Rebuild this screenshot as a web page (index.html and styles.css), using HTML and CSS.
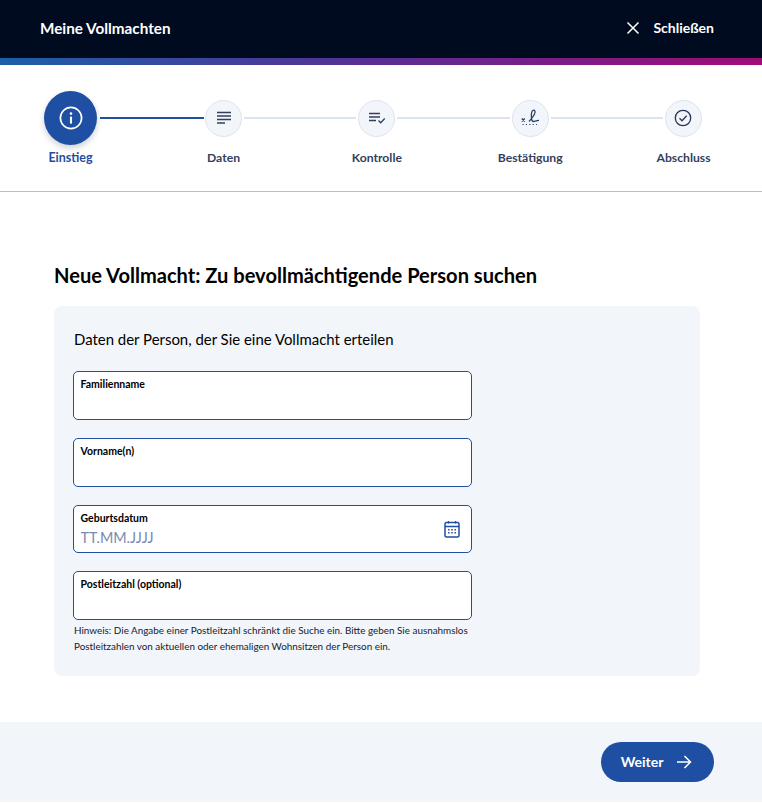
FILE: index.html
```html
<!DOCTYPE html>
<html lang="de">
<head>
<meta charset="utf-8">
<title>Meine Vollmachten</title>
<link rel="stylesheet" href="styles.css">
</head>
<body>
<header class="topbar">
  <span class="topbar-title">Meine Vollmachten</span>
  <button class="close" type="button">
    <svg class="close-icon" viewBox="0 0 14 14" width="14" height="14"><path d="M1.500 1.500l11 11M12.500 1.500l-11 11" fill="none" stroke="#fff" stroke-width="1.500"/></svg>
    <span class="close-text">Schließen</span>
  </button>
</header>
<div class="rainbow"></div>
<nav class="stepper">
  <div class="step step-active">
    <div class="slot"><span class="dot dot-big">
      <svg viewBox="0 0 24 24" width="24" height="24"><circle cx="12" cy="12" r="10.600" fill="none" stroke="#fff" stroke-width="1.700"/><circle cx="12" cy="7.600" r="1.300" fill="#fff"/><path d="M12 10.600v7" stroke="#fff" stroke-width="2.100" fill="none"/></svg>
    </span></div>
    <span class="step-label">Einstieg</span>
  </div>
  <span class="line line-done"></span>
  <div class="step">
    <div class="slot"><span class="dot">
      <svg viewBox="0 0 16 16" width="16" height="16"><path d="M1 2.500h14M1 6h14M1 9.500h14M1 13h8" stroke="#333f5c" stroke-width="1.300" fill="none"/></svg>
    </span></div>
    <span class="step-label">Daten</span>
  </div>
  <span class="line"></span>
  <div class="step">
    <div class="slot"><span class="dot">
      <svg viewBox="0 0 20 16" width="20" height="16"><path d="M2 3.500h11M2 7h11M2 10.500h7" stroke="#333f5c" stroke-width="1.300" fill="none"/><path d="M11.500 10.500l2.200 2.200 4-4.200" stroke="#27406f" stroke-width="1.300" fill="none"/></svg>
    </span></div>
    <span class="step-label">Kontrolle</span>
  </div>
  <span class="line"></span>
  <div class="step">
    <div class="slot"><span class="dot">
      <svg viewBox="0 0 22 18" width="22" height="18"><path d="M2.800 9.500l3 3M5.800 9.500l-3 3" stroke="#27406f" stroke-width="1.300" fill="none"/><path d="M10 12.500C12.500 9.500 17 5 16 2.200 15.200.5 13 1 12.600 3.500c-.5 3-.4 9 1.700 9 1.700 0 2.500-1 5.700-1.200" stroke="#27406f" stroke-width="1.300" fill="none"/><path d="M3.500 15.500h14.500" stroke="#27406f" stroke-width="1.200" stroke-dasharray="1.100 2.300" fill="none"/></svg>
    </span></div>
    <span class="step-label">Bestätigung</span>
  </div>
  <span class="line"></span>
  <div class="step">
    <div class="slot"><span class="dot">
      <svg viewBox="0 0 18 18" width="18" height="18"><circle cx="9" cy="9" r="7.700" fill="none" stroke="#27375a" stroke-width="1.300"/><path d="M5.500 9.200l2.500 2.500 4.700-5" stroke="#27375a" stroke-width="1.300" fill="none"/></svg>
    </span></div>
    <span class="step-label">Abschluss</span>
  </div>
</nav>
<main class="content">
  <h1 class="heading">Neue Vollmacht: Zu bevollmächtigende Person suchen</h1>
  <section class="card">
    <h2 class="card-title">Daten der Person, der Sie eine Vollmacht erteilen</h2>
    <div class="fields">
      <div class="field"><label class="field-label" for="f1">Familienname</label><input id="f1" class="field-input" type="text"></div>
      <div class="field"><label class="field-label" for="f2">Vorname(n)</label><input id="f2" class="field-input" type="text"></div>
      <div class="field field-date"><label class="field-label" for="f3">Geburtsdatum</label><input id="f3" class="field-input" type="text" placeholder="TT.MM.JJJJ">
        <svg class="cal-icon" viewBox="0 0 16 18" width="16" height="18"><rect x="1" y="2.500" width="14" height="14.500" rx="1.500" fill="none" stroke="#1f4fa3" stroke-width="1.500"/><path d="M1 6.500h14" stroke="#1f4fa3" stroke-width="1.500"/><path d="M4.500 1v2.500M11.500 1v2.500" stroke="#1f4fa3" stroke-width="1.300"/><path d="M4 9.800h1.600M7.200 9.800h1.600M10.400 9.800H12M4 12.800h1.600M7.200 12.800h1.600M10.400 12.800H12" stroke="#3d5490" stroke-width="1.500"/></svg>
      </div>
      <div class="field"><label class="field-label" for="f4">Postleitzahl (optional)</label><input id="f4" class="field-input" type="text"></div>
    </div>
    <p class="hint">Hinweis: Die Angabe einer Postleitzahl schränkt die Suche ein. Bitte geben Sie ausnahmslos Postleitzahlen von aktuellen oder ehemaligen Wohnsitzen der Person ein.</p>
  </section>
</main>
<footer class="footer">
  <button class="next" type="button">
    <span class="next-text">Weiter</span>
    <svg viewBox="0 0 16 14" width="16" height="14"><path d="M1 7h13.500M8.500 1l6 6-6 6" fill="none" stroke="#fff" stroke-width="1.500"/></svg>
  </button>
</footer>
</body>
</html>
```
FILE: styles.css
```css
* { box-sizing: border-box; }
html, body { margin: 0; padding: 0; }
body { font-family: Lato, "Liberation Sans", sans-serif; background: #fff; color: #000; width: 762px; height: 803px; overflow: hidden; }

.topbar { height: 58px; background: #000b1f; display: flex; align-items: center; justify-content: space-between; padding: 0 48px 2px 40px; color: #fff; }
.topbar-title { font-size: 15.25px; font-weight: 700; }
.close { display: flex; align-items: center; gap: 13px; background: none; border: 0; padding: 0; color: #fff; font: 700 14px/16px Lato, sans-serif; }
.close-icon { display: block; margin-left: 1px; }
.close-text { display: block; }
.rainbow { height: 7px; background: linear-gradient(90deg, #1b5fa8 0%, #5a2d92 50%, #a10b78 100%); }

.stepper { height: 127px; border-bottom: 1px solid #b0bdd2; display: flex; align-items: flex-start; padding: 26px 60px 0 44px; }
.step { display: flex; flex-direction: column; align-items: center; width: 37px; flex: none; }
.step-active { width: 53px; }
.slot { height: 54px; display: flex; align-items: center; justify-content: center; }
.dot { width: 37px; height: 37px; border-radius: 50%; background: #f2f5f9; border: 1px solid #dde4f0; display: flex; align-items: center; justify-content: center; }
.dot-big { width: 53px; height: 54px; background: #1f4fa3; border: 0; box-shadow: 0 3px 6px rgba(0, 20, 60, 0.2); }
.step-label { margin-top: 5px; font-size: 12.2px; font-weight: 700; line-height: 15px; color: #333f5c; white-space: nowrap; }
.step-active .step-label { color: #1f4fa3; font-size: 12.5px; }
.line { flex: 1; height: 2px; margin: 26px 2px 0; background: #dbe3ef; }
.line-done { flex: none; width: 104px; background: #1f4fa3; margin-left: 3px; margin-right: 1px; }

.content { padding: 70px 62px 0 54px; height: 530px; }
.heading { margin: 0 0 18px; font-size: 20.08px; font-weight: 700; line-height: 26px; }
.card { height: 370px; background: #f2f5f9; border-radius: 8px; padding: 23px 19px 0; }
.card-title { margin: 0 0 21.35px; padding-left: 1px; font-size: 14.95px; font-weight: 400; line-height: 21px; }
.fields { display: flex; flex-direction: column; gap: 17.93px; }
.field { position: relative; width: 398.67px; height: 48.67px; background: #fff; border: 1px solid #1f4fa3; border-radius: 5px; padding: 6px 6.5px 0; display: flex; flex-direction: column; }
.field-label { font-size: 10.5px; font-weight: 700; line-height: 13px; }
.field-input { border: 0; outline: 0; padding: 0; background: transparent; font: 400 14.4px Lato, sans-serif; height: 22px; margin-top: 2px; }
.field-input::placeholder { color: #7a8ab0; opacity: 1; }
.cal-icon { position: absolute; right: 11px; top: 14px; }
.hint { margin: 2px 0 0; padding: 0 1px; width: 400px; font-size: 9.9px; line-height: 16.7px; color: #141b30; }

.footer { height: 80px; background: #f2f5f9; display: flex; align-items: center; justify-content: flex-end; padding: 0 48px 0 0; }
.next { width: 113px; height: 40px; border: 0; border-radius: 20px; background: #1f4fa3; color: #fff; font: 700 14px/16px Lato, sans-serif; display: flex; align-items: center; justify-content: center; gap: 13px; padding: 0 2px 0 0; }
.next-text { display: block; margin-top: -1px; }
```
